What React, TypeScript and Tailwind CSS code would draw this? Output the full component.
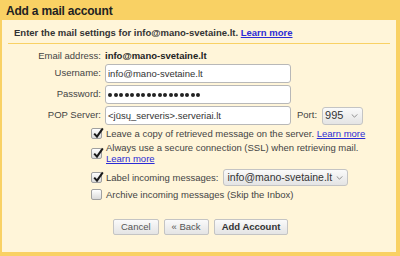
import React from 'react';

const Check = ({ on }: { on: boolean }) => (
  <span className="relative inline-block h-[11px] w-[11px] shrink-0 rounded-[2px] border border-[#a0a0a0] bg-gradient-to-b from-[#ffffff] to-[#dadada]">
    {on && (
      <svg viewBox="0 0 12 12" className="absolute left-[0px] -top-[2px] h-[12px] w-[12px]">
        <path d="M2.2 6.6 L5 9.6 L10.8 1.4" fill="none" stroke="#1a1a1a" strokeWidth="2" />
      </svg>
    )}
  </span>
);

const Field = ({ label, children }: { label: string; children: React.ReactNode }) => (
  <div className="flex h-[19px] items-center">
    <div className="w-[97px] pr-[4px] text-right">{label}</div>
    {children}
  </div>
);

const inputCls =
  'h-[19px] w-[186px] whitespace-nowrap rounded-[3px] border border-[#b8b8b8] bg-white px-[2px] text-[9.5px] leading-[17px] text-[#333]';

const Arrow = () => (
  <svg viewBox="0 0 8 5" className="h-[4px] w-[7px] shrink-0">
    <path d="M0.5 0.5 L4 4 L7.5 0.5" fill="none" stroke="#777" strokeWidth="1" />
  </svg>
);

const Btn = ({ children, bold }: { children: React.ReactNode; bold?: boolean }) => (
  <button
    className={`h-[16px] rounded-[2px] border border-[#c4c4c4] bg-gradient-to-b from-[#fafafa] to-[#e4e4e4] px-[7px] text-[9.5px] leading-[14px] ${bold ? 'font-bold text-[#333]' : 'text-[#555]'}`}
  >
    {children}
  </button>
);

export default function App() {
  return (
    <div
      className="h-[256px] w-[400px] overflow-hidden bg-[#f9d164] text-[9.5px] text-[#444]"
      style={{ fontFamily: '"Liberation Sans", Arial, sans-serif' }}
    >
      <div className="h-[20px] pl-[6px] pt-[5px] text-[12px] font-bold leading-[13px] tracking-[-0.2px] text-[#222]">
        Add a mail account
      </div>
      <div className="ml-[2px] h-[232px] w-[394px] bg-[#fff5d9] px-[6px]">
        <div className="flex h-[24px] items-end border-b-[1.5px] border-[#f9d164] pb-[5px] pl-[6px] font-bold leading-[11px] text-[#333]">
          Enter the mail settings for info@mano-svetaine.lt.&nbsp;
          <a className="text-[#2b2bd6] underline">Learn more</a>
        </div>
        <div className="flex flex-col gap-[2px] pt-[6px]">
          <div className="flex h-[12px] items-center">
            <div className="w-[97px] pr-[4px] text-right">Email address:</div>
            <span className="font-bold text-[#222]">info@mano-svetaine.lt</span>
          </div>
          <Field label="Username:">
            <div className={inputCls}>info@mano-svetaine.lt</div>
          </Field>
          <Field label="Password:">
            <div className={`${inputCls} flex items-center gap-[1.5px]`}>
              {Array.from({ length: 17 }).map((_, i) => (
                <span key={i} className="h-[4px] w-[4px] rounded-full bg-[#222]" />
              ))}
            </div>
          </Field>
          <Field label="POP Server:">
            <div className={inputCls}>&lt;jūsų_serveris&gt;.serveriai.lt</div>
            <span className="ml-[6px] mr-[5px]">Port:</span>
            <div className="flex h-[18px] w-[41px] items-center justify-between rounded-[3px] border border-[#c4c4c4] bg-gradient-to-b from-[#fafafa] to-[#e4e4e4] pl-[2px] pr-[4px] text-[11px] text-[#333]">
              <span>995</span>
              <Arrow />
            </div>
          </Field>
        </div>
        <div className="ml-[83px] mt-[3px] flex flex-col gap-[3px] leading-[11px]">
          <div className="flex items-center gap-[4px]">
            <Check on />
            <span>
              Leave a copy of retrieved message on the server.{' '}
              <a className="text-[#2b2bd6] underline">Learn more</a>
            </span>
          </div>
          <div className="flex items-center gap-[4px]">
            <Check on />
            <span>
              Always use a secure connection (SSL) when retrieving mail.
              <br />
              <a className="text-[#2b2bd6] underline">Learn more</a>
            </span>
          </div>
          <div className="mt-[2px] flex h-[17px] items-center gap-[4px]">
            <Check on />
            <span>Label incoming messages:</span>
            <div className="ml-[1px] flex h-[17px] w-[125px] items-center justify-between whitespace-nowrap rounded-[3px] border border-[#c4c4c4] bg-gradient-to-b from-[#fafafa] to-[#e4e4e4] pl-[3px] pr-[4px] text-[10.5px] text-[#333]">
              <span>info@mano-svetaine.lt</span>
              <Arrow />
            </div>
          </div>
          <div className="flex items-center gap-[4px]">
            <Check on={false} />
            <span>Archive incoming messages (Skip the Inbox)</span>
          </div>
        </div>
        <div className="ml-[105px] mt-[19px] flex gap-[5px]">
          <Btn>Cancel</Btn>
          <Btn>« Back</Btn>
          <Btn bold>Add Account</Btn>
        </div>
      </div>
    </div>
  );
}
